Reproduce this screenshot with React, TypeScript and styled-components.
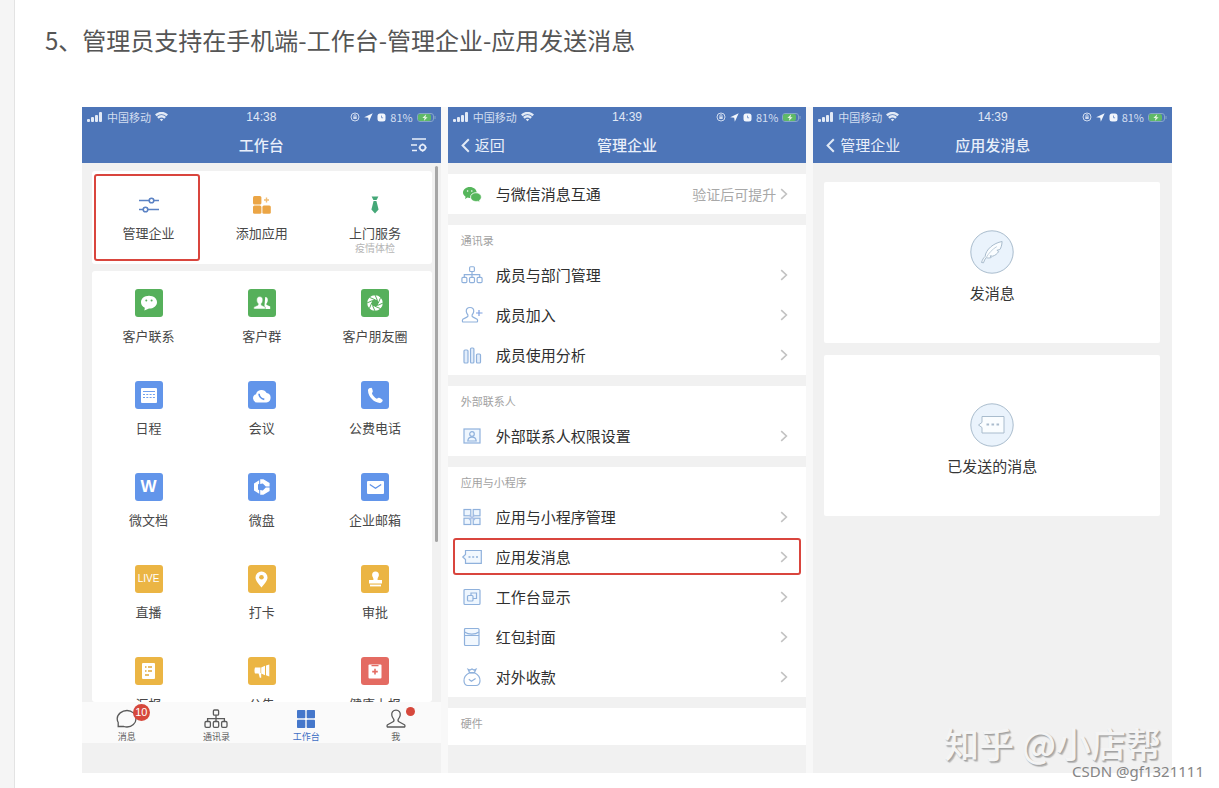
import React from "react";
import styled, { createGlobalStyle, css } from "styled-components";

const sans = `"Noto Sans CJK SC", "Liberation Sans", sans-serif`;

const GlobalStyle = createGlobalStyle`
  *, *::before, *::after { box-sizing: border-box; }
  body { margin: 0; background: #fff; color: #4d4d4d; font-family: ${sans}; }
  button { margin: 0; padding: 0; border: 0; background: none; color: inherit; font: inherit; cursor: pointer; }
  svg { display: block; flex: none; }
`;

/* ---------- page ---------- */

const Page = styled.div`
  position: relative;
  display: flex;
  min-height: 100vh;
`;

const Gutter = styled.div`
  flex: none;
  width: 15px;
  background: #f5f5f5;
  border-right: 1px solid #e3e3e3;
`;

const Article = styled.main`
  flex: 1;
  min-width: 0;
  padding: 20px 47px 15px 30px;
`;

const StepTitle = styled.h2`
  margin: 0 0 47px;
  font-size: 24px;
  line-height: 40px;
  font-weight: 400;
  color: #555;
`;

const Figure = styled.figure`
  position: relative;
  display: grid;
  grid-template-columns: repeat(3, minmax(0, 1fr));
  gap: 7px;
  margin: 0 0 0 37px;
  background: #f8f8f8;
`;

const Watermark = styled.figcaption`
  position: absolute;
  right: 11px;
  bottom: 10px;
  font-size: 35px;
  line-height: 40px;
  font-weight: 500;
  color: #f4f4f4;
  text-shadow: 1px 1px 1px #a0a0a0, 2px 2px 1px #bcbcbc;
`;

const Credit = styled.small`
  position: absolute;
  right: 15px;
  bottom: 8px;
  font-family: "Noto Sans", sans-serif;
  font-size: 15px;
  line-height: 18px;
  color: #858585;
`;

/* ---------- phone frame ---------- */

const Phone = styled.section`
  position: relative;
  display: flex;
  flex-direction: column;
  min-width: 0;
  background: #f1f1f1;
`;

const Header = styled.header`
  background: #4d75b8;
  color: #e9effa;
`;

const Triple = styled.div<{ $height: number; $pad: string }>`
  display: grid;
  grid-template-columns: 1fr auto 1fr;
  align-items: center;
  height: ${(p) => p.$height}px;
  padding: ${(p) => p.$pad};
`;

const Cluster = styled.div<{ $end?: boolean }>`
  display: flex;
  align-items: center;
  gap: 4px;
  justify-content: ${(p) => (p.$end ? "flex-end" : "flex-start")};
  font-size: 11px;
  line-height: 20px;
  color: #d3def0;
`;

const Clock = styled.time`
  font-family: "Liberation Sans", sans-serif;
  font-size: 12px;
  line-height: 20px;
  color: #e0e8f5;
`;

const NavTitle = styled.h3`
  margin: 0;
  font-size: 15px;
  line-height: 20px;
  font-weight: 500;
`;

const BackButton = styled.button`
  display: flex;
  align-items: center;
  gap: 5px;
  font-size: 15px;
  line-height: 20px;
`;

const NavAction = styled.button`
  justify-self: end;
`;

/* ---------- workbench ---------- */

const Workbench = styled.div`
  display: flex;
  flex-direction: column;
  gap: 7px;
  padding: 8px 9px 0 10px;
`;

const TileCard = styled.div<{ $height: number }>`
  display: grid;
  grid-template-columns: repeat(3, 1fr);
  align-content: start;
  height: ${(p) => p.$height}px;
  overflow: hidden;
  border-radius: 3px;
  background: #fff;
`;

const frame = css`
  &::after {
    content: "";
    position: absolute;
    border: 2px solid #d9453d;
    border-radius: 3px;
  }
`;

const Tile = styled.button<{ $plain?: boolean; $marked?: boolean }>`
  position: relative;
  display: flex;
  flex-direction: column;
  align-items: center;
  gap: ${(p) => (p.$plain ? 6 : 11)}px;
  height: ${(p) => (p.$plain ? 93 : 92)}px;
  padding-top: ${(p) => (p.$plain ? 20 : 18)}px;
  font-size: 13px;
  line-height: 16px;
  color: #484848;
  ${(p) => p.$marked && frame}
  &::after { inset: 3px 5px 3px 2px; }
`;

const TileLabel = styled.span`
  display: flex;
  flex-direction: column;
  align-items: center;
`;

const TileNote = styled.small`
  font-size: 10px;
  line-height: 13px;
  color: #b5b5b5;
`;

const Glyph = styled.span<{ $bg?: string; $size?: number }>`
  display: flex;
  align-items: center;
  justify-content: center;
  width: 28px;
  height: 28px;
  border-radius: 3px;
  background: ${(p) => p.$bg ?? "transparent"};
  color: #fff;
  font-family: "Liberation Sans", sans-serif;
  font-size: ${(p) => p.$size ?? 10}px;
  font-weight: ${(p) => (p.$size ? 700 : 400)};
`;

const ScrollThumb = styled.div`
  position: absolute;
  top: 59px;
  right: 3px;
  width: 3px;
  height: 376px;
  border-radius: 2px;
  background: #a6a6a6;
`;

const TabBar = styled.nav`
  display: grid;
  grid-template-columns: repeat(4, 1fr);
  height: 41px;
  margin-bottom: 30px;
  background: #fafafa;
`;

const Tab = styled.button<{ $active?: boolean }>`
  display: flex;
  flex-direction: column;
  align-items: center;
  gap: 2px;
  padding-top: 7px;
  font-size: 9px;
  line-height: 12px;
  color: ${(p) => (p.$active ? "#3f6fc4" : "#5e5e5e")};
`;

const TabIcon = styled.span`
  position: relative;
`;

const Badge = styled.span`
  position: absolute;
  top: -5px;
  left: 17px;
  width: 17px;
  height: 17px;
  border-radius: 50%;
  background: #d6483c;
  color: #fff;
  font-family: "Liberation Sans", sans-serif;
  font-size: 11px;
  line-height: 17px;
  text-align: center;
`;

const Dot = styled.span`
  position: absolute;
  top: -2px;
  left: 20px;
  width: 9px;
  height: 9px;
  border-radius: 50%;
  background: #d6483c;
`;

/* ---------- settings list ---------- */

const Groups = styled.div`
  display: flex;
  flex-direction: column;
  gap: 11px;
  padding: 11px 0 28px;
`;

const Group = styled.div`
  background: #fff;
`;

const GroupTitle = styled.h4`
  margin: 0;
  padding-left: 13px;
  font-size: 11px;
  line-height: 30px;
  font-weight: 400;
  color: #a2a2a2;
`;

const LastGroup = styled(Group)`
  padding-bottom: 7px;
`;

const Row = styled.button<{ $marked?: boolean }>`
  position: relative;
  display: flex;
  align-items: center;
  width: 100%;
  height: 40px;
  padding: 0 18px 0 13px;
  font-size: 15px;
  line-height: 20px;
  color: #2f2f2f;
  text-align: left;
  ${(p) => p.$marked && frame}
  &::after { inset: 1px 5px 2px; }
`;

const RowText = styled.span`
  flex: 1;
  padding-left: 13px;
`;

const RowHint = styled.span`
  padding-right: 4px;
  font-size: 14px;
  color: #a8a8a8;
`;

/* ---------- message actions ---------- */

const Actions = styled.div`
  display: flex;
  flex-direction: column;
  gap: 12px;
  padding: 19px 12px 0 11px;
`;

const ActionCard = styled.button`
  display: flex;
  flex-direction: column;
  align-items: center;
  gap: 9px;
  height: 161px;
  padding-top: 48px;
  border-radius: 2px;
  background: #fff;
  font-size: 15px;
  line-height: 20px;
  color: #363636;
`;

/* ---------- drawings ---------- */

const Signal = () => (
  <svg width="16" height="10" viewBox="0 0 16 10" fill="#e2eaf6">
    <rect x="0" y="7" width="3" height="3" rx="1" />
    <rect x="4" y="5" width="3" height="5" rx="1" />
    <rect x="8" y="3" width="3" height="7" rx="1" />
    <rect x="12" y="0" width="3" height="10" rx="1" />
  </svg>
);

const Wifi = () => (
  <svg width="13" height="10" viewBox="0 0 13 10" fill="none" stroke="#e2eaf6" strokeWidth="2.4">
    <path d="M.8 3.4a8 8 0 0 1 11.4 0M2.9 5.8a5 5 0 0 1 7.2 0" />
    <path d="M6.5 9.3 4.8 7.6a2.4 2.4 0 0 1 3.4 0z" fill="#e2eaf6" stroke="none" />
  </svg>
);

const RotationLock = () => (
  <svg width="10" height="10" viewBox="0 0 10 10" fill="none" stroke="#cfdbef">
    <circle cx="5" cy="5" r="4" />
    <rect x="3.3" y="4.6" width="3.4" height="2.4" fill="#cfdbef" stroke="none" />
    <path d="M4 4.8V3.6a1 1 0 0 1 2 0v1.2" />
  </svg>
);

const LocationArrow = () => (
  <svg width="9" height="9" viewBox="0 0 9 9" fill="#f2f6fc">
    <path d="M8.7.3.2 4.2l4 .6.6 4z" />
  </svg>
);

const Alarm = () => (
  <svg width="9" height="9" viewBox="0 0 9 9">
    <rect x=".5" y=".5" width="8" height="8" rx="2.5" fill="#f2f6fc" />
    <path d="M4.5 2.6v2.2h1.6" fill="none" stroke="#7f9dcf" />
  </svg>
);

const Battery = () => (
  <svg width="19" height="9" viewBox="0 0 19 9">
    <rect x=".5" y=".5" width="16" height="8" rx="2.5" fill="none" stroke="#86a5c9" />
    <rect x="1" y="1" width="13" height="7" rx="2" fill="#5fb967" />
    <path d="M9.2 1.2 5.4 5h2.2l-.8 3 3.8-3.8H8.4z" fill="#e9f6e6" />
    <path d="M18 3v3" stroke="#86a5c9" />
  </svg>
);

const BackArrow = () => (
  <svg width="9" height="15" viewBox="0 0 9 15" fill="none" stroke="#e2eaf6" strokeWidth="2">
    <path d="M7.8 1.2 1.6 7.5l6.2 6.3" />
  </svg>
);

const Chevron = () => (
  <svg width="8" height="12" viewBox="0 0 8 12" fill="none" stroke="#c2c2c2" strokeWidth="1.6">
    <path d="M1.2 1.2 6.4 6l-5.2 4.8" />
  </svg>
);

const MenuGear = () => (
  <svg width="18" height="16" viewBox="0 0 18 16" fill="none" stroke="#e9effa" strokeWidth="1.6">
    <path d="M2 2h14M1 8h6M2 13.5h5" />
    <circle cx="12.6" cy="10.6" r="2.8" />
    <path d="M12.6 6.4v1.4M12.6 13.4v1.4M8.6 10.6H10M15.2 10.6h1.4" />
  </svg>
);

const Sliders = () => (
  <svg width="22" height="18" viewBox="0 0 22 18" fill="none" stroke="#5b82c4" strokeWidth="1.6">
    <path d="M1 4.5h10M16 4.5h5M1 13.5h4M10 13.5h11" />
    <circle cx="13.5" cy="4.5" r="2.3" />
    <circle cx="7.5" cy="13.5" r="2.3" />
  </svg>
);

const AddApps = () => (
  <svg width="18" height="18" viewBox="0 0 18 18" fill="#eba545">
    <rect x="0" y="0" width="8.4" height="8.4" rx="1.5" />
    <rect x="0" y="9.4" width="8.4" height="8.4" rx="1.5" />
    <rect x="9.4" y="9.4" width="8.4" height="8.4" rx="1.5" />
    <path d="M13.5 1.5v5M11 4h5" stroke="#f0bd76" strokeWidth="1.4" />
  </svg>
);

const Tie = () => (
  <svg width="10" height="18" viewBox="0 0 10 18" fill="#45a878">
    <path d="M1.6.5h6.8L6.6 4H3.4z" />
    <path d="M3.6 5h2.8l2.2 8.5L5 17.5l-3.600-4z" />
  </svg>
);

const ChatFace = () => (
  <svg width="18" height="16" viewBox="0 0 18 16">
    <path d="M9 .8c4.600 0 8 2.800 8 6.400s-3.400 6.400-8 6.400l-4.600 1.800.4-2.600C2.400 11.600 1 9.600 1 7.200 1 3.600 4.400.8 9 .8z" fill="#fff" />
    <circle cx="6.300" cy="5.600" r="1" fill="#58b05c" />
    <circle cx="11.600" cy="5.600" r="1" fill="#58b05c" />
  </svg>
);

const People = () => (
  <svg width="18" height="14" viewBox="0 0 18 14" fill="#fff">
    <path d="M12.200 1c1.700 0 2.600 1.300 2.600 3 0 1.500-.6 2.800-1.400 3.600v1.200l3.800 1.800V13h-6z" />
    <path d="M6.800.6c2 0 3 1.400 3 3.300 0 1.600-.6 2.900-1.500 3.700v1.500l4 1.900v2H.8v-2l4.300-1.900V7.600C4.200 6.800 3.700 5.500 3.700 3.900 3.700 2 4.800.6 6.800.6z" stroke="#58b05c" strokeWidth=".5" />
  </svg>
);

const Aperture = () => (
  <svg width="18" height="18" viewBox="0 0 18 18" fill="none">
    <circle cx="9" cy="9" r="5.600" stroke="#fff" strokeWidth="4.400" />
    <path
      d="m9 1 2.500 5.500M14.700 3.300 12.300 9M17 9l-5.500 2.500M14.700 14.700 9 12.300M9 17l-2.500-5.500M3.300 14.700 5.700 9M1 9l5.500-2.500M3.300 3.300 9 5.700"
      stroke="#58b05c"
    />
  </svg>
);

const Calendar = () => (
  <svg width="16" height="15" viewBox="0 0 16 15">
    <rect width="16" height="15" rx="1" fill="#fff" />
    <path d="M2 3.500h12" stroke="#6f9fee" />
    <path d="M2 6.500h12M2 9.500h12" stroke="#6f9fee" strokeWidth="1.200" strokeDasharray="2 1.300" />
  </svg>
);

const CloudCall = () => (
  <svg width="19" height="15" viewBox="0 0 19 15">
    <path d="M5 14.500a4.200 4.200 0 0 1-1-8.200A5.700 5.700 0 0 1 14.600 5a4.800 4.800 0 0 1-.2 9.500z" fill="#fff" />
    <path d="M7 5.800c.2 3 1.800 4.800 5.300 5.600" fill="none" stroke="#5f92e8" strokeWidth="1.600" />
  </svg>
);

const Handset = () => (
  <svg width="17" height="17" viewBox="0 0 17 17" fill="#fff">
    <path d="M2.200 1.300 4.300.8c.7 0 1.800 3.300 1.500 4L4.900 6.300c.8 2.300 2.500 4.200 4.900 5.400l1.700-1c.8-.2 4.300 1.700 4.200 2.500 0 1.400-1.300 2.700-2.800 2.700C7.300 15.800 1.200 10 1 3.500c0-.9.400-1.800 1.200-2.200z" />
  </svg>
);

const DiskLogo = () => (
  <svg width="18" height="18" viewBox="0 0 18 18" fill="#fff">
    <path d="M1 5.400 6.200 2.300v3.500L5 6.600v4.800l1.200.8v3.500L1 12.600z" />
    <path d="M7.200 1.200h3.200L16.600 5v3.400h-3.800L9.800 5.400 7.200 6z" />
    <path d="M7.200 16.800h3.200l6.200-3.800V9.600h-3.800l-3 3-2.600-.6z" />
  </svg>
);

const Envelope = () => (
  <svg width="17" height="13" viewBox="0 0 17 13">
    <rect width="17" height="13" rx="1" fill="#fff" />
    <path d="m2.800 3.400 5.700 3.800 5.700-3.800" fill="none" stroke="#5f92e8" strokeWidth="1.200" />
  </svg>
);

const Pin = () => (
  <svg width="13" height="17" viewBox="0 0 13 17">
    <path d="M6.500.5a5.900 5.900 0 0 1 6 6c0 3.300-3.400 6.800-6 10-2.600-3.200-6-6.700-6-10a5.900 5.900 0 0 1 6-6z" fill="#fff" />
    <circle cx="6.500" cy="6.300" r="2.300" fill="#ebb544" />
  </svg>
);

const Stamp = () => (
  <svg width="15" height="16" viewBox="0 0 15 16" fill="#fff">
    <path d="M7.500.4a3.500 3.500 0 0 1 3.400 3.500c0 1.700-1.300 2.500-1.300 4.100v1H14v3.600H1V9h4.400V8c0-1.600-1.300-2.400-1.300-4.100A3.500 3.500 0 0 1 7.500.4z" />
    <rect x="2" y="13.600" width="11" height="1.800" />
  </svg>
);

const Report = () => (
  <svg width="13" height="16" viewBox="0 0 13 16">
    <rect width="13" height="16" rx="1" fill="#fff" />
    <path d="M3 4h1.500M6 4h4M3 8h1.500M6 8h4M3 12h4" stroke="#e0a93c" strokeWidth="1.400" />
  </svg>
);

const Megaphone = () => (
  <svg width="16" height="14" viewBox="0 0 16 14" fill="#fff">
    <path d="M1 3.400h5.500v6.200H1C.3 8 .3 5 1 3.400zM7.200 3.400 11 1.800v9.400L7.200 9.600zM12 1.500 15.300.4v12.200L12 11.300z" />
    <path d="M4.500 9h2.700v4.800H5.800z" />
  </svg>
);

const MedicalBoard = () => (
  <svg width="14" height="16" viewBox="0 0 14 16">
    <rect x=".5" y="1.500" width="13" height="14" rx="1" fill="#fff" />
    <path d="M3.500 2.600h7" stroke="#e46b62" strokeWidth="1.400" />
    <path d="M7 5.800v5.600M4.200 8.600h5.600" stroke="#e46b62" strokeWidth="1.600" />
  </svg>
);

const Bubble = () => (
  <svg width="22" height="20" viewBox="0 0 22 20" fill="none" stroke="#5a5a5a" strokeWidth="1.300">
    <path d="M11 1.500c5 0 9 3.600 9 8.200s-4 8.300-9 8.300c-1.200 0-2.200-.2-3.200-.5H2.200v-4C1.500 12.300 1.200 11 1.200 9.700 1.200 5.100 6 1.500 11 1.500z" />
  </svg>
);

const OrgChart = ({ color = "#5a5a5a", width = 24 }: { color?: string; width?: number }) => (
  <svg width={width} height="20" viewBox="0 0 24 20" fill="none" stroke={color} strokeWidth="1.300">
    <rect x="9.400" y="1" width="5.200" height="5.200" rx="1" />
    <path d="M12 6.200v6M3.600 12.500V9.600h16.800v2.900" />
    <rect x="1" y="12.500" width="5.400" height="5.800" rx="1.200" />
    <rect x="9.300" y="12.500" width="5.400" height="5.800" rx="1.200" />
    <rect x="17.600" y="12.500" width="5.400" height="5.800" rx="1.200" />
  </svg>
);

const FourSquares = () => (
  <svg width="20" height="20" viewBox="0 0 20 20" fill="#4577cb">
    <rect x="1" y="1" width="8.300" height="8.300" rx=".8" />
    <rect x="10.700" y="1" width="8.300" height="8.300" rx=".8" />
    <rect x="1" y="10.700" width="8.300" height="8.300" rx=".8" />
    <rect x="10.700" y="10.700" width="8.300" height="8.300" rx=".8" />
  </svg>
);

const Person = () => (
  <svg width="20" height="20" viewBox="0 0 20 20" fill="none" stroke="#5a5a5a" strokeWidth="1.300">
    <path d="M10 1.200c3 0 4.600 2.200 4.200 5-.2 1.800-1.200 3.200-2 4.200-.5 1.200 0 2 1.200 2.600l5 2.800c.6.400.8 1.600.2 2.200H1.400c-.6-.6-.4-1.800.2-2.200l5-2.800c1.200-.6 1.700-1.400 1.200-2.600-.8-1-1.800-2.400-2-4.200-.4-2.800 1.200-5 4.200-5z" />
  </svg>
);

const RowSvg = ({ children }: { children: React.ReactNode }) => (
  <svg width="22" height="20" viewBox="0 0 22 20" fill="none" stroke="#8fb1dc" strokeWidth="1.200">
    {children}
  </svg>
);

const WechatLogo = () => (
  <svg width="22" height="20" viewBox="0 0 22 20" fill="#56b65c">
    <path d="M8.800 3c3.800 0 6.600 2.300 6.900 5.200-4 .1-6.700 2.500-6.400 5.700-1 .1-1.900 0-2.800-.3L4 15l.6-2.300C2.900 11.700 2 10.300 2 8.600 2 5.500 5 3 8.800 3z" />
    <path d="M14.900 8.800c3 0 5.400 1.900 5.400 4.300 0 1.400-.8 2.600-2 3.400l.5 1.700-2-.9c-.6.100-1.200.2-1.900.2-3 0-5.300-2-5.300-4.400s2.300-4.300 5.300-4.300z" stroke="#fff" strokeWidth=".6" />
    <circle cx="6.600" cy="7" r=".8" fill="#fff" />
    <circle cx="10.800" cy="7" r=".8" fill="#fff" />
  </svg>
);

const PersonPlus = () => (
  <RowSvg>
    <path d="M9 2.500c2.700 0 4 1.900 3.700 4.200-.2 1.500-.9 2.500-1.600 3.300-.4 1 0 1.600 1 2.100l4 2.200c.6.500.7 2.200 0 2.700H1.800c-.6-.5-.5-2.200 0-2.700l4.100-2.200c1-.5 1.400-1.100 1-2.100-.7-.8-1.400-1.800-1.600-3.300C5 4.400 6.300 2.500 9 2.500z" />
    <path d="M18 5v6M15 8h6.500" stroke="#7d9fe0" />
  </RowSvg>
);

const Bars = () => (
  <RowSvg>
    <rect x="3" y="5" width="4" height="13" rx="1" fill="#e3eefb" />
    <rect x="9.500" y="3" width="3.400" height="15" rx="1" fill="#e3eefb" />
    <rect x="15.500" y="9" width="4" height="9" rx="1" fill="#e3eefb" />
  </RowSvg>
);

const ContactCard = () => (
  <RowSvg>
    <rect x="3" y="3" width="16" height="14" fill="#eef6fe" />
    <circle cx="11" cy="8" r="2.300" />
    <path d="M6.800 15c.2-2.600 2-3.800 4.200-3.800s4 1.200 4.200 3.800z" />
  </RowSvg>
);

const AppGrid = () => (
  <RowSvg>
    <rect x="3" y="2.500" width="6.800" height="6.300" fill="#eef6fe" />
    <rect x="12.200" y="2.500" width="6.800" height="6.300" fill="#eef6fe" />
    <rect x="3" y="11.200" width="6.800" height="6.300" fill="#eef6fe" />
    <rect x="12.200" y="11.200" width="6.800" height="6.300" fill="#eef6fe" />
    <path d="m8 8 6 5M14 8l-6 5" stroke="#a9bfe6" />
  </RowSvg>
);

const MessageTag = () => (
  <RowSvg>
    <path d="M4.500 3.500h15.800v12.800H4.500v-3.800L1.800 10l2.700-2.500z" fill="#f2f8fe" />
    <path d="M7.500 10h2M11.200 10h2M15 10h2" strokeWidth="1.500" />
  </RowSvg>
);

const Display = () => (
  <RowSvg>
    <rect x="3" y="2.500" width="16" height="15" rx="1" fill="#eef6fe" />
    <rect x="6.500" y="8.500" width="5.500" height="5.500" rx="1" />
    <path d="M10 8V6h5.500v5.500H12" />
  </RowSvg>
);

const RedPacket = () => (
  <RowSvg>
    <rect x="3.500" y="1.500" width="14.500" height="17" rx="1" fill="#f2f8fe" />
    <path d="M3.500 5c4.200 2.800 10.300 2.800 14.500 0M3.500 8.500H18" />
  </RowSvg>
);

const MoneyBag = () => (
  <RowSvg>
    <path d="m7 2.200 2 .8 2-1 2 1 2-.8-1.600 3.400H8.600z" />
    <path d="M8.500 5.800C5 7.500 2.800 10.500 3 14c.2 2.700 1.700 4.500 4 4.500h8c2.300 0 3.800-1.800 4-4.500.2-3.500-2-6.500-5.500-8.200z" />
    <path d="m7.800 12.300 2.600 2 4.200-2.800" />
  </RowSvg>
);

const Circle = ({ children }: { children: React.ReactNode }) => (
  <svg width="44" height="44" viewBox="0 0 44 44" fill="none" stroke="#a9bccd">
    <circle cx="22" cy="22" r="21.200" fill="#eaf3fc" />
    {children}
  </svg>
);

const Feather = () => (
  <Circle>
    <path d="M11.500 32.500c1-3 2-4.600 3.600-6 .6-7 8.500-13.500 17-15-.2 3.600-1 6.200-2.200 8l-3 .8 1.800 1.200c-1.400 2.400-3.800 4-6 4.700l-2.500-.4 1 1.700c-1.800.7-3.600.6-5 .1-1.200 1.500-2.200 3.200-2.700 5.200z" fill="#fafdff" />
    <path d="M16.200 27.600c2.600-4.600 6-8.200 10.600-11" stroke="#c3d1de" />
  </Circle>
);

const SentMessages = () => (
  <Circle>
    <path d="M12 13.500h22v16.500H12v-5.500L8.500 22l3.500-2.600z" fill="#fafdff" />
    <path d="M16.500 21.500h2.600M21.500 21.500h2.600M26.500 21.500h2.600" strokeWidth="2.200" />
  </Circle>
);

/* ---------- data ---------- */

const GREEN = "#56b05b";
const BLUE = "#6295ea";
const AMBER = "#ebb544";
const RED = "#e46b62";

type App = { name: string; bg: string; icon: React.ReactNode; size?: number };

const apps: App[] = [
  { name: "客户联系", bg: GREEN, icon: <ChatFace /> },
  { name: "客户群", bg: GREEN, icon: <People /> },
  { name: "客户朋友圈", bg: GREEN, icon: <Aperture /> },
  { name: "日程", bg: BLUE, icon: <Calendar /> },
  { name: "会议", bg: BLUE, icon: <CloudCall /> },
  { name: "公费电话", bg: BLUE, icon: <Handset /> },
  { name: "微文档", bg: BLUE, icon: "W", size: 17 },
  { name: "微盘", bg: BLUE, icon: <DiskLogo /> },
  { name: "企业邮箱", bg: BLUE, icon: <Envelope /> },
  { name: "直播", bg: AMBER, icon: "LIVE" },
  { name: "打卡", bg: AMBER, icon: <Pin /> },
  { name: "审批", bg: AMBER, icon: <Stamp /> },
  { name: "汇报", bg: AMBER, icon: <Report /> },
  { name: "公告", bg: AMBER, icon: <Megaphone /> },
  { name: "健康上报", bg: RED, icon: <MedicalBoard /> },
];

type Item = { name: string; icon: React.ReactNode; hint?: string; marked?: boolean };

const groups: { title?: string; items: Item[] }[] = [
  { items: [{ name: "与微信消息互通", icon: <WechatLogo />, hint: "验证后可提升" }] },
  {
    title: "通讯录",
    items: [
      { name: "成员与部门管理", icon: <OrgChart color="#8fb1dc" width={22} /> },
      { name: "成员加入", icon: <PersonPlus /> },
      { name: "成员使用分析", icon: <Bars /> },
    ],
  },
  { title: "外部联系人", items: [{ name: "外部联系人权限设置", icon: <ContactCard /> }] },
  {
    title: "应用与小程序",
    items: [
      { name: "应用与小程序管理", icon: <AppGrid /> },
      { name: "应用发消息", icon: <MessageTag />, marked: true },
      { name: "工作台显示", icon: <Display /> },
      { name: "红包封面", icon: <RedPacket /> },
      { name: "对外收款", icon: <MoneyBag /> },
    ],
  },
];

/* ---------- composition ---------- */

type HeaderProps = { time: string; title: string; back?: string; action?: React.ReactNode };

const PhoneHeader = ({ time, title, back, action }: HeaderProps) => (
  <Header>
    <Triple $height={20} $pad="0 5px">
      <Cluster>
        <Signal />
        中国移动
        <Wifi />
      </Cluster>
      <Clock>{time}</Clock>
      <Cluster $end>
        <RotationLock />
        <LocationArrow />
        <Alarm />
        81%
        <Battery />
      </Cluster>
    </Triple>
    <Triple $height={36} $pad="0 13px">
      <div>
        {back && (
          <BackButton type="button">
            <BackArrow />
            {back}
          </BackButton>
        )}
      </div>
      <NavTitle>{title}</NavTitle>
      {action}
    </Triple>
  </Header>
);

export default function App() {
  return (
    <Page>
      <GlobalStyle />
      <Gutter />
      <Article>
        <StepTitle>5、管理员支持在手机端-工作台-管理企业-应用发送消息</StepTitle>
        <Figure>
          <Phone>
            <PhoneHeader
              time="14:38"
              title="工作台"
              action={
                <NavAction type="button" aria-label="设置">
                  <MenuGear />
                </NavAction>
              }
            />
            <Workbench>
              <TileCard $height={93}>
                <Tile type="button" $plain $marked>
                  <Glyph><Sliders /></Glyph>
                  <TileLabel>管理企业</TileLabel>
                </Tile>
                <Tile type="button" $plain>
                  <Glyph><AddApps /></Glyph>
                  <TileLabel>添加应用</TileLabel>
                </Tile>
                <Tile type="button" $plain>
                  <Glyph><Tie /></Glyph>
                  <TileLabel>
                    上门服务
                    <TileNote>疫情体检</TileNote>
                  </TileLabel>
                </Tile>
              </TileCard>
              <TileCard $height={431}>
                {apps.map((app) => (
                  <Tile type="button" key={app.name}>
                    <Glyph $bg={app.bg} $size={app.size}>{app.icon}</Glyph>
                    <TileLabel>{app.name}</TileLabel>
                  </Tile>
                ))}
              </TileCard>
            </Workbench>
            <TabBar>
              <Tab type="button">
                <TabIcon><Bubble /><Badge>10</Badge></TabIcon>
                消息
              </Tab>
              <Tab type="button">
                <TabIcon><OrgChart /></TabIcon>
                通讯录
              </Tab>
              <Tab type="button" $active>
                <TabIcon><FourSquares /></TabIcon>
                工作台
              </Tab>
              <Tab type="button">
                <TabIcon><Person /><Dot /></TabIcon>
                我
              </Tab>
            </TabBar>
            <ScrollThumb />
          </Phone>

          <Phone>
            <PhoneHeader time="14:39" title="管理企业" back="返回" />
            <Groups>
              {groups.map((group, i) => (
                <Group key={i}>
                  {group.title && <GroupTitle>{group.title}</GroupTitle>}
                  {group.items.map((item) => (
                    <Row type="button" key={item.name} $marked={item.marked}>
                      {item.icon}
                      <RowText>{item.name}</RowText>
                      {item.hint && <RowHint>{item.hint}</RowHint>}
                      <Chevron />
                    </Row>
                  ))}
                </Group>
              ))}
              <LastGroup>
                <GroupTitle>硬件</GroupTitle>
              </LastGroup>
            </Groups>
          </Phone>

          <Phone>
            <PhoneHeader time="14:39" title="应用发消息" back="管理企业" />
            <Actions>
              <ActionCard type="button">
                <Feather />
                发消息
              </ActionCard>
              <ActionCard type="button">
                <SentMessages />
                已发送的消息
              </ActionCard>
            </Actions>
          </Phone>
          <Watermark>知乎 @小店帮</Watermark>
        </Figure>
      </Article>
      <Credit>CSDN @gf1321111</Credit>
    </Page>
  );
}
